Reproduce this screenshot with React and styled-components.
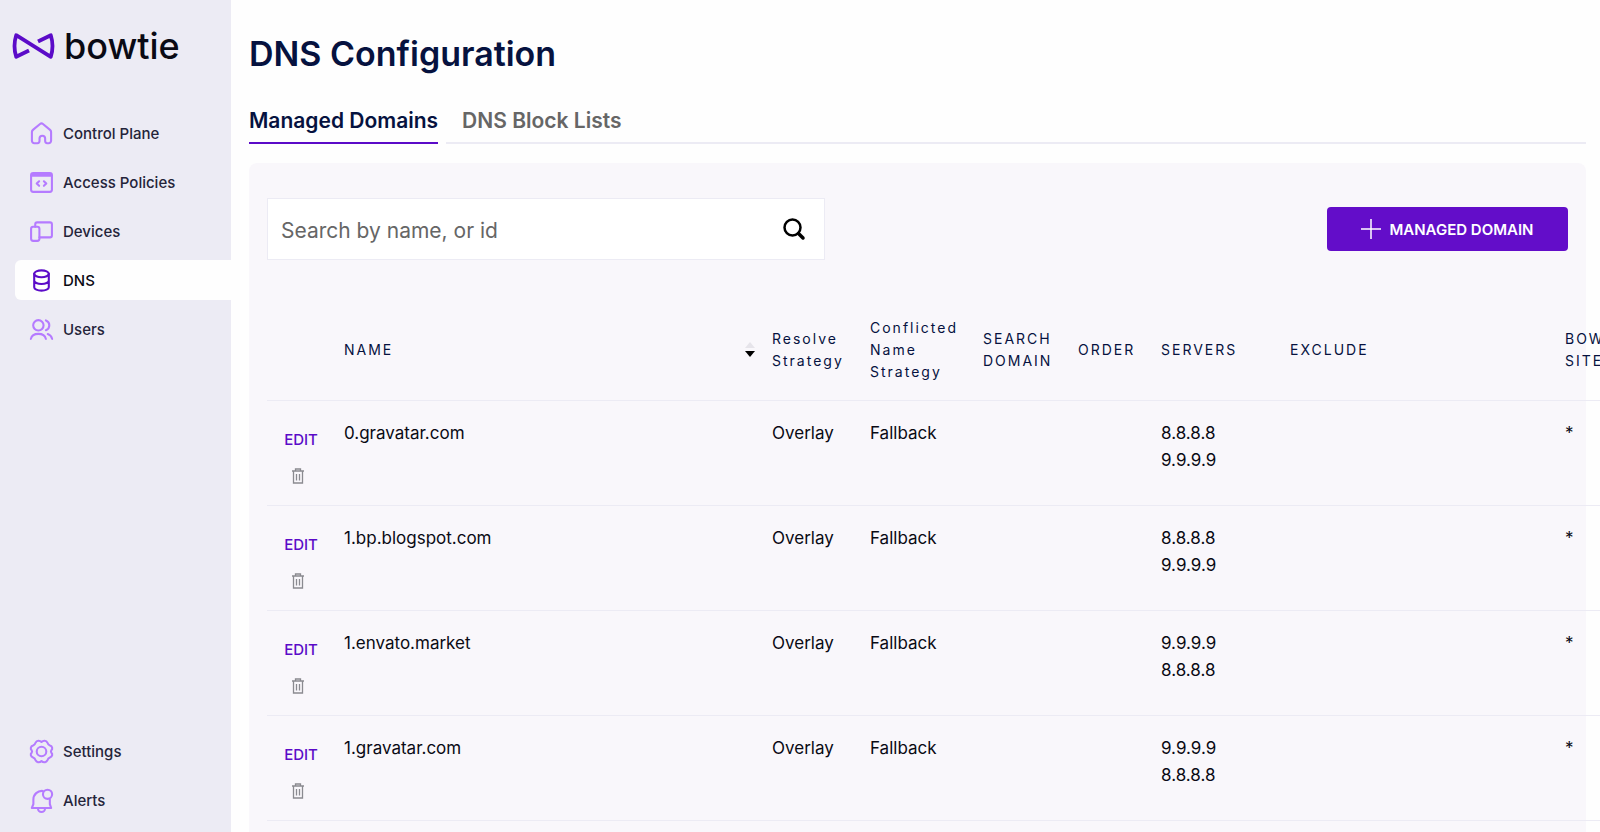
import React from 'react'
import styled, { createGlobalStyle } from 'styled-components'

const GlobalStyle = createGlobalStyle`
    *{
        box-sizing: border-box;
    }
    body{
        margin: 0;
        background-color: #fefefe;
        color: #0a0a14;
        font-family: Inter, "Liberation Sans", sans-serif;
        overflow-x: hidden;
    }
    button, input{
        font-family: inherit;
    }
`

const Container = styled.div`
    display: flex;
    min-height: 100vh;
    overflow: hidden;
`

const Sidebar = styled.aside`
    width: 231px;
    flex-shrink: 0;
    display: flex;
    flex-direction: column;
    justify-content: space-between;
    padding: 24px 0 12px;
    background-color: #ecebf4;
`
const Logo = styled.a`
    display: flex;
    align-items: center;
    gap: 9px;
    height: 44px;
    margin-bottom: 45px;
    padding-left: 12px;
    color: #0a0a14;
    font-size: 36px;
    font-weight: 500;
    line-height: 44px;
    text-decoration: none;
`
const NavList = styled.nav`
    display: flex;
    flex-direction: column;
    gap: 9px;
    padding-left: 15px;
`
const NavItem = styled.a`
    display: flex;
    align-items: center;
    gap: 9px;
    height: 40px;
    padding-left: 14px;
    border-radius: 6px 0 0 6px;
    background-color: ${props => props.$active ? '#fefefe' : 'transparent'};
    color: ${props => props.$active ? '#0a0a14' : '#24243a'};
    font-size: 15px;
    font-weight: 500;
    text-decoration: none;

    svg{
        color: ${props => props.$active ? '#5b0bc8' : '#b57bff'};
    }
`

const Main = styled.main`
    flex: 1;
    min-width: 0;
    display: flex;
    flex-direction: column;
    padding: 30px 14px 0 18px;
`
const Title = styled.h1`
    margin: 0 0 21px;
    color: #06123f;
    font-size: 34px;
    font-weight: 600;
    line-height: 48px;
`
const Tabs = styled.div`
    display: flex;
`
const Tab = styled.button`
    height: 45px;
    padding: 0;
    border: none;
    border-bottom: 2px solid #5b0bc8;
    background: none;
    color: #06123f;
    font-size: 21px;
    font-weight: 600;
    cursor: pointer;

    & + &{
        margin-left: 8px;
        padding-left: 16px;
        border-color: #ecebf4;
        color: #666;
    }
`
const TabsLine = styled.div`
    flex: 1;
    border-bottom: 2px solid #ecebf4;
`
const Panel = styled.section`
    flex: 1;
    margin-top: 19px;
    padding: 35px 18px 0;
    border-radius: 8px 8px 0 0;
    background-color: #f9f7fb;
`
const Toolbar = styled.div`
    display: flex;
    align-items: center;
    justify-content: space-between;
    gap: 24px;
`
const SearchBox = styled.label`
    display: flex;
    align-items: center;
    flex: 1;
    max-width: 558px;
    height: 62px;
    padding: 0 18px 0 13px;
    border: 1px solid #ecebf4;
    background-color: #fff;
`
const SearchInput = styled.input`
    flex: 1;
    min-width: 0;
    padding: 2px 0 0;
    border: none;
    outline: none;
    background: none;
    font-size: 21px;

    &::placeholder{
        color: #666;
        opacity: 1;
    }
`
const AddButton = styled.button`
    display: flex;
    align-items: center;
    justify-content: center;
    gap: 8px;
    width: 241px;
    height: 44px;
    padding: 0;
    border: none;
    border-radius: 4px;
    background-color: #630dc9;
    color: #fff;
    font-size: 15px;
    font-weight: 600;
    cursor: pointer;
`

const Table = styled.table`
    width: 1420px;
    margin-top: 40px;
    border-collapse: collapse;
    table-layout: fixed;
`
const Col = styled.col`
    width: ${props => props.$width}px;
`
const HeadCell = styled.th`
    height: 100px;
    padding: 0 ${props => props.$sortable ? '3px' : '14px'} 0 14px;
    border-bottom: 1px solid #ecebf4;
    color: #06123f;
    font-size: 14px;
    font-weight: 400;
    letter-spacing: 2px;
    line-height: 22px;
    text-align: left;
`
const SortHeader = styled.div`
    display: flex;
    align-items: center;
    justify-content: space-between;
`
const Cell = styled.td`
    height: 105px;
    padding: 19px 14px;
    border-bottom: 1px solid #ecebf4;
    font-size: 17px;
    line-height: 27px;
    vertical-align: top;
`
const Actions = styled.div`
    display: flex;
    flex-direction: column;
    align-items: center;
    gap: 15px;
    width: 32px;
    margin-left: 4px;
    padding-top: 6px;
`
const EditButton = styled.button`
    padding: 0;
    border: none;
    background: none;
    color: #5b0bc8;
    font-size: 15px;
    font-weight: 500;
    line-height: 27px;
    cursor: pointer;
`
const DeleteButton = styled.button`
    display: flex;
    margin-right: 6px;
    padding: 0;
    border: none;
    background: none;
    color: #8a8a90;
    cursor: pointer;
`

const Icon = ({ children }) => (
    <svg width="25" height="25" viewBox="0 0 24 24" fill="none" stroke="currentColor" strokeWidth="2" strokeLinecap="round" strokeLinejoin="round">
        {children}
    </svg>
)

const HomeIcon = () => (
    <Icon>
        <path d="M2.800 10.600c0-.9.300-1.500 1-2.100l6.800-5.600a2.200 2.200 0 0 1 2.800 0l6.800 5.600c.7.600 1 1.200 1 2.100v8.400a2.300 2.300 0 0 1-2.300 2.300h-1.400a2 2 0 0 1-2-2v-2.400a2.700 2.700 0 0 0-5.400 0v2.400a2 2 0 0 1-2 2H5.100A2.300 2.300 0 0 1 2.800 19z"/>
    </Icon>
)
const PolicyIcon = () => (
    <Icon>
        <rect x="2" y="3" width="20" height="18" rx="2"/>
        <path d="M3 5h18" strokeWidth="3"/>
        <path d="m9.700 10.800-2.300 2.200 2.300 2.200M14.300 10.800l2.300 2.200-2.300 2.200"/>
    </Icon>
)
const DevicesIcon = () => (
    <Icon>
        <rect x="2" y="7.500" width="8" height="13.500" rx="2"/>
        <path d="M6 7.500V5c0-1 .8-1.800 1.800-1.800h12.400c1 0 1.800.8 1.800 1.800v10.800c0 1-.8 1.800-1.800 1.800H10"/>
    </Icon>
)
const DnsIcon = () => (
    <Icon>
        <ellipse cx="12" cy="5.600" rx="7" ry="3.300"/>
        <path d="M5 5.600v12.800c0 1.900 3.100 3.300 7 3.300s7-1.400 7-3.300V5.600M5 12c0 1.900 3.100 3.300 7 3.300s7-1.400 7-3.300"/>
    </Icon>
)
const UsersIcon = () => (
    <Icon>
        <circle cx="9" cy="8" r="5"/>
        <path d="M16.200 3.300a5 5 0 0 1 0 9.400M1.800 21c.7-3 3.600-4.800 7.200-4.800s6.500 1.800 7.200 4.800M18 16.400c2.100.8 3.700 2.400 4.200 4.600"/>
    </Icon>
)
const CogIcon = () => (
    <svg width="25" height="25" viewBox="0 0 24 24" fill="none" stroke="currentColor" strokeWidth="2" strokeLinejoin="round">
        <path d="M12 2.800C13.400 1.300 16.700 1 17.600 3.400C18.100 5 18.600 5.800 20.100 6.300C22.600 7 22.800 9.500 21.500 10.700Q20.600 12 21.500 13.300C22.800 14.500 22.600 17 20.100 17.700C18.600 18.200 18.100 19 17.600 20.600C16.700 23 13.400 22.700 12 21.200C10.600 22.700 7.300 23 6.400 20.600C5.900 19 5.400 18.200 3.900 17.700C1.400 17 1.200 14.500 2.500 13.300Q3.400 12 2.500 10.700C1.200 9.500 1.400 7 3.900 6.300C5.400 5.800 5.900 5 6.400 3.400C7.300 1 10.600 1.300 12 2.800z"/>
        <circle cx="12" cy="12" r="4.600"/>
    </svg>
)
const BellIcon = () => (
    <Icon>
        <path d="M13.200 2.800a8.300 8.300 0 0 0-9 8.200v4.500l-1.500 3.700h18.600l-1.300-3.700v-4.700"/>
        <circle cx="17.800" cy="6" r="4.400"/>
        <path d="M8.600 19.600a3.400 3.400 0 0 0 6.800 0"/>
    </Icon>
)

const BowtieMark = () => (
    <svg width="43" height="26" viewBox="0 0 43 26" fill="none" stroke="#5b0bc8" strokeWidth="3.800" strokeLinejoin="round">
        <path d="M17 17.500 4.200 23.800Q.8 13 4.200 2.200L38.800 23.800Q42.200 13 38.800 2.200L26 8.500"/>
    </svg>
)
const SearchIcon = () => (
    <svg width="24" height="24" viewBox="0 0 24 24" fill="none" stroke="#000" strokeWidth="2.500" strokeLinecap="round">
        <circle cx="10.500" cy="10.500" r="8"/>
        <path d="m16.500 16.500 4.500 4.500" strokeWidth="3.500"/>
    </svg>
)
const PlusIcon = () => (
    <svg width="20" height="20" viewBox="0 0 20 20" stroke="currentColor" strokeWidth="1.500">
        <path d="M10 0v20M0 10h20"/>
    </svg>
)
const SortIcon = () => (
    <svg width="10" height="16" viewBox="0 0 10 16">
        <path d="M0 6 5 0l5 6z" fill="#e6e4ea"/>
        <path d="M0 9h10l-5 6z" fill="#000"/>
    </svg>
)
const TrashIcon = () => (
    <svg width="14" height="16" viewBox="0 0 14 16" fill="none" stroke="currentColor" strokeWidth="1.300">
        <path d="M1 3h12M4.500 3V1h5v2M2.500 3v12h9V3M5.500 6v6.500M8.500 6v6.500"/>
    </svg>
)

const mainLinks = [
    { label: 'Control Plane', icon: <HomeIcon/> },
    { label: 'Access Policies', icon: <PolicyIcon/> },
    { label: 'Devices', icon: <DevicesIcon/> },
    { label: 'DNS', icon: <DnsIcon/>, active: true },
    { label: 'Users', icon: <UsersIcon/> },
]
const bottomLinks = [
    { label: 'Settings', icon: <CogIcon/> },
    { label: 'Alerts', icon: <BellIcon/> },
]
const columns = [63, 428, 98, 113, 95, 83, 129, 275, 136]
const domains = [
    { name: '0.gravatar.com', servers: ['8.8.8.8', '9.9.9.9'] },
    { name: '1.bp.blogspot.com', servers: ['8.8.8.8', '9.9.9.9'] },
    { name: '1.envato.market', servers: ['9.9.9.9', '8.8.8.8'] },
    { name: '1.gravatar.com', servers: ['9.9.9.9', '8.8.8.8'] },
]

const Links = ({ items }) => (
    <NavList>
        {items.map(item => (
            <NavItem key={item.label} href="#" $active={item.active}>
                {item.icon}
                {item.label}
            </NavItem>
        ))}
    </NavList>
)

const App = () => {
    return (
        <Container>
            <GlobalStyle/>
            <Sidebar>
                <div>
                    <Logo href="#">
                        <BowtieMark/>
                        bowtie
                    </Logo>
                    <Links items={mainLinks}/>
                </div>
                <Links items={bottomLinks}/>
            </Sidebar>
            <Main>
                <Title>DNS Configuration</Title>
                <Tabs>
                    <Tab>Managed Domains</Tab>
                    <Tab>DNS Block Lists</Tab>
                    <TabsLine/>
                </Tabs>
                <Panel>
                    <Toolbar>
                        <SearchBox>
                            <SearchInput type="text" aria-label="Search" placeholder="Search by name, or id"/>
                            <SearchIcon/>
                        </SearchBox>
                        <AddButton>
                            <PlusIcon/>
                            MANAGED DOMAIN
                        </AddButton>
                    </Toolbar>
                    <Table>
                        <colgroup>
                            {columns.map((width, i) => <Col key={i} $width={width}/>)}
                        </colgroup>
                        <thead>
                            <tr>
                                <HeadCell/>
                                <HeadCell $sortable>
                                    <SortHeader>NAME<SortIcon/></SortHeader>
                                </HeadCell>
                                <HeadCell>Resolve Strategy</HeadCell>
                                <HeadCell>Conflicted Name Strategy</HeadCell>
                                <HeadCell>SEARCH DOMAIN</HeadCell>
                                <HeadCell>ORDER</HeadCell>
                                <HeadCell>SERVERS</HeadCell>
                                <HeadCell>EXCLUDE</HeadCell>
                                <HeadCell>BOWTIE SITES</HeadCell>
                            </tr>
                        </thead>
                        <tbody>
                            {domains.map(domain => (
                                <tr key={domain.name}>
                                    <Cell>
                                        <Actions>
                                            <EditButton>EDIT</EditButton>
                                            <DeleteButton aria-label="Delete"><TrashIcon/></DeleteButton>
                                        </Actions>
                                    </Cell>
                                    <Cell>{domain.name}</Cell>
                                    <Cell>Overlay</Cell>
                                    <Cell>Fallback</Cell>
                                    <Cell/>
                                    <Cell/>
                                    <Cell>
                                        {domain.servers.map(server => <div key={server}>{server}</div>)}
                                    </Cell>
                                    <Cell/>
                                    <Cell>*</Cell>
                                </tr>
                            ))}
                        </tbody>
                    </Table>
                </Panel>
            </Main>
        </Container>
    )
}

export default App
